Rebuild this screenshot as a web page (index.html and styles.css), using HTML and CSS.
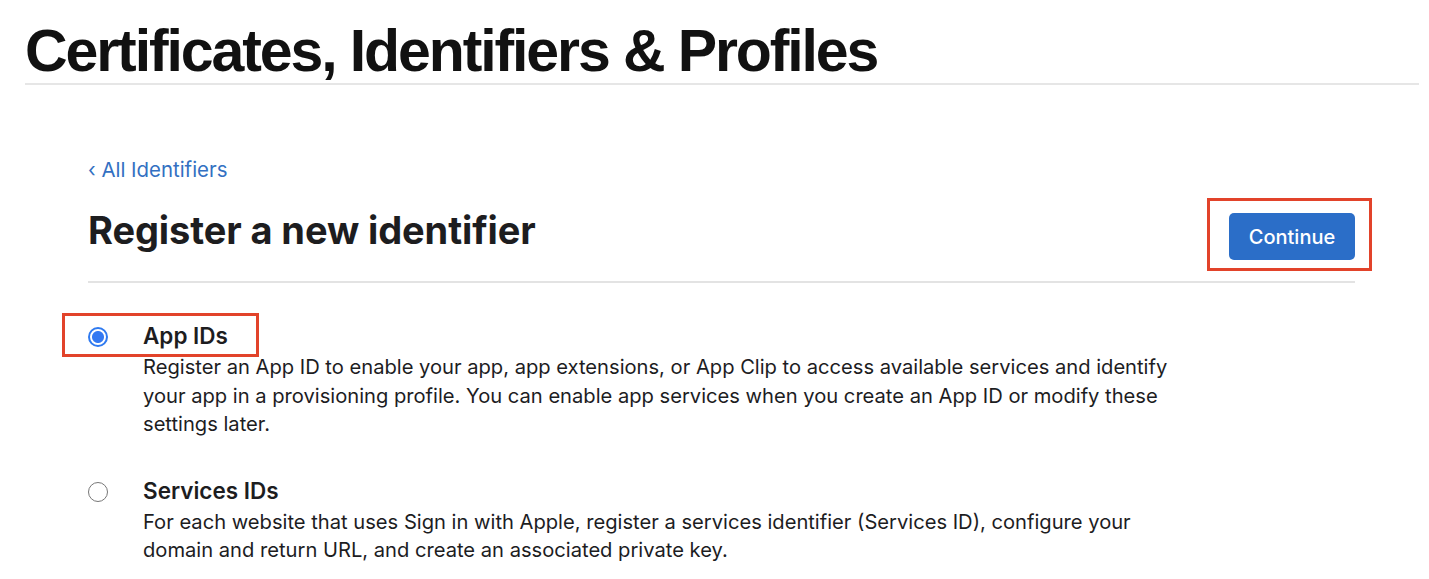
FILE: index.html
```html
<!DOCTYPE html>
<html lang="en">
<head>
<meta charset="utf-8">
<title>Certificates, Identifiers &amp; Profiles</title>
<link rel="stylesheet" href="styles.css">
</head>
<body>
<header class="page-header">
  <h1 class="page-title">Certificates, Identifiers &amp; Profiles</h1>
</header>
<main class="content">
  <a class="back-link" href="#"><span class="chev">‹</span> All Identifiers</a>
  <div class="section-head">
    <h2 class="section-title">Register a new identifier</h2>
    <div class="btn-wrap">
      <button class="btn-primary" type="button">Continue</button>
      <span class="highlight highlight-btn"></span>
    </div>
  </div>
  <ul class="options">
    <li class="option">
      <div class="radio-cell">
        <span class="radio checked"></span>
      </div>
      <div class="option-body">
        <div class="option-title">App IDs</div>
        <p class="option-desc">Register an App ID to enable your app, app extensions, or App Clip to access available services and identify your app in a provisioning profile. You can enable app services when you create an App ID or modify these settings later.</p>
      </div>
      <span class="highlight highlight-opt"></span>
    </li>
    <li class="option">
      <div class="radio-cell">
        <span class="radio"></span>
      </div>
      <div class="option-body">
        <div class="option-title">Services IDs</div>
        <p class="option-desc">For each website that uses Sign in with Apple, register a services identifier (Services ID), configure your domain and return URL, and create an associated private key.</p>
      </div>
    </li>
  </ul>
</main>
</body>
</html>
```
FILE: styles.css
```css
* { box-sizing: border-box; }
html, body { margin: 0; padding: 0; background: #fff; }
body {
  font-family: Inter, "Noto Sans", "Liberation Sans", sans-serif;
  color: #1d1d1f;
  overflow: hidden;
}
.page-header {
  margin: 0 10px 0 25px;
  padding-top: 20px;
  border-bottom: 2px solid #e6e6e6;
}
.page-title {
  margin: 0;
  font-family: "Liberation Sans", Arial, sans-serif;
  font-weight: 700;
  font-size: 59px;
  line-height: 62px;
  letter-spacing: -2.1px;
  color: #111;
  padding-bottom: 1px;
}
.content {
  margin-left: 88px;
  width: 1267px;
  padding-top: 73px;
}
.back-link {
  display: block;
  color: #3370c2;
  text-decoration: none;
  font-size: 20.4px;
  line-height: 24px;
}
.back-link .chev { font-size: 20px; }
.section-head {
  display: flex;
  align-items: flex-start;
  justify-content: space-between;
  border-bottom: 2px solid #e3e3e3;
  height: 101px;
}
.section-title {
  margin: 26px 0 0;
  font-size: 38px;
  line-height: 44px;
  font-weight: 700;
  letter-spacing: -0.1px;
  color: #1d1d1f;
}
.btn-wrap { position: relative; margin-top: 31px; }
.btn-primary {
  display: block;
  width: 126px;
  height: 47px;
  border: none;
  border-radius: 5px;
  background: #2b6ec8;
  color: #fff;
  font-family: Inter, "Noto Sans", sans-serif;
  font-size: 20px;
  font-weight: 500;
}
.highlight {
  position: absolute;
  border: 3px solid #e2432a;
  pointer-events: none;
}
.highlight-btn { left: -22px; right: -17px; top: -15px; bottom: -11px; }
.options { list-style: none; margin: 0; padding: 30px 0 0; }
.option {
  position: relative;
  display: flex;
  margin-bottom: 29px;
}
.radio-cell { width: 55px; flex: none; padding-top: 14px; }
.radio {
  display: block;
  width: 20px;
  height: 20px;
  border-radius: 50%;
  border: 1.5px solid #777;
  background: #fff;
}
.radio.checked {
  border: 2px solid #2f7af0;
  background: radial-gradient(circle, #3479f2 0 5.5px, #fff 6.5px);
}
.option-title {
  font-size: 22.5px;
  font-weight: 600;
  line-height: 34px;
  margin-top: 6px;
}
.option-desc {
  margin: 0;
  width: 1050px;
  font-size: 20.15px;
  line-height: 28.5px;
  color: #1d1d1f;
}
.highlight-opt { left: -26px; top: 0; width: 197px; height: 44px; }
```
